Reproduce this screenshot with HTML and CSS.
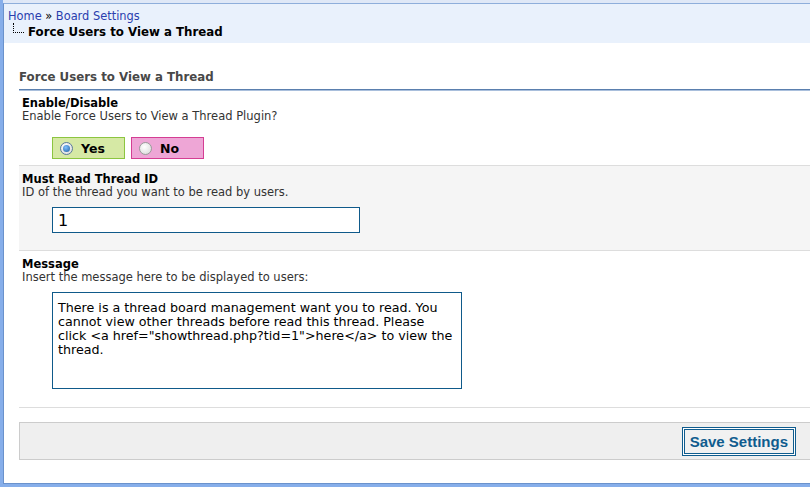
FILE: index.html
```html
<!DOCTYPE html>
<html lang="en">
<head>
    <meta charset="UTF-8">
    <title>Force Users to View a Thread</title>
    <link rel="stylesheet" href="styles.css">
</head>
<body>
    <div class="page">
        <div class="breadcrumb">
            <div><a href="#">Home</a> &raquo; <a href="#">Board Settings</a></div>
            <div class="current"><span class="tree"></span>Force Users to View a Thread</div>
        </div>

        <div class="content">
            <div class="form-container">
                <h2>Force Users to View a Thread</h2>

                <div class="row">
                    <label>Enable/Disable</label>
                    <div class="description">Enable Force Users to View a Thread Plugin?</div>
                    <div class="choices">
                        <div class="choice yes"><span class="radio checked"></span>Yes</div>
                        <div class="choice no"><span class="radio"></span>No</div>
                    </div>
                </div>

                <div class="row alt">
                    <label>Must Read Thread ID</label>
                    <div class="description">ID of the thread you want to be read by users.</div>
                    <input type="text" class="text-input" value="1">
                </div>

                <div class="row">
                    <label>Message</label>
                    <div class="description">Insert the message here to be displayed to users:</div>
                    <textarea class="text-area">There is a thread board management want you to read. You cannot view other threads before read this thread. Please click &lt;a href="showthread.php?tid=1"&gt;here&lt;/a&gt; to view the thread.</textarea>
                </div>

                <div class="buttons">
                    <button class="submit">Save Settings</button>
                </div>
            </div>
        </div>
    </div>
</body>
</html>
```

FILE: styles.css
```css
html {
    overflow: hidden;
}

body {
    margin: 0;
    padding: 3px 0 0 3px;
    width: 830px;
    height: 487px;
    box-sizing: border-box;
    background: #86aeea;
    font-family: Verdana, 'DejaVu Sans', sans-serif;
    font-size: 11.5px;
    color: #000;
}

.page {
    background: white;
    border-top: 1px solid #8eaedb;
    border-left: 1px solid #6a92cc;
    border-bottom: 1px solid #6a92cc;
    box-shadow: 0 -3px 0 #dfe8f7;
    height: 479px;
}

.breadcrumb {
    background: #e9f1fc;
    padding: 5px 4px 4px 4px;
    font-size: 11.4px;
    line-height: 14px;
}

.breadcrumb a {
    color: #2a3eae;
    text-decoration: none;
}

.breadcrumb .current {
    font-weight: bold;
    font-size: 11.8px;
    padding-left: 5px;
}

.tree {
    display: inline-block;
    width: 10px;
    height: 9px;
    margin-right: 4px;
    border-left: 1px dotted #000;
    border-bottom: 1px dotted #000;
    vertical-align: 3px;
}

.content {
    padding: 27px 0 0 15px;
}

h2 {
    margin: 0;
    font-size: 11.8px;
    line-height: 14px;
    color: #484848;
    padding-bottom: 5px;
    border-bottom: 1px solid #5a7fae;
    box-shadow: 0 1px 0 #a9bfdc;
}

.row {
    padding: 7px 3px 6px 3px;
    border-bottom: 1px solid #ddd;
}

.row.alt {
    background: #f5f5f5;
}

label {
    display: block;
    font-weight: bold;
    line-height: 13px;
}

.description {
    color: #333;
    line-height: 13px;
    margin-bottom: 8px;
}

.choices {
    display: flex;
    gap: 6px;
    padding-left: 30px;
    margin-top: 14px;
}

.choice {
    width: 71px;
    height: 20px;
    display: flex;
    align-items: center;
    font-weight: bold;
    font-size: 12.5px;
}

.choice.yes {
    background: #d6e9a5;
    border: 1px solid #8cc540;
}

.choice.no {
    background: #eea6d6;
    border: 1px solid #d43e93;
}

.radio {
    width: 11px;
    height: 11px;
    border-radius: 50%;
    border: 1px solid #9a9a9a;
    background: radial-gradient(circle at 40% 35%, #fff, #d6d6d6);
    margin: 0 8px 0 7px;
    position: relative;
}

.radio.checked {
    border-color: #5a7a9a;
}

.radio.checked::after {
    content: "";
    position: absolute;
    left: 2px;
    top: 2px;
    width: 7px;
    height: 7px;
    border-radius: 50%;
    background: radial-gradient(circle at 40% 35%, #7fc0ff, #1f5f9f);
}

.text-input {
    display: block;
    margin: 0 0 11px 30px;
    width: 308px;
    height: 26px;
    box-sizing: border-box;
    border: 1px solid #0f5a8a;
    padding: 1px 5px;
    font-family: Verdana, 'DejaVu Sans', sans-serif;
    font-size: 16px;
    background: white;
}

.text-area {
    display: block;
    margin: 3px 0 12px 30px;
    width: 410px;
    height: 97px;
    box-sizing: border-box;
    border: 1px solid #0f5a8a;
    padding: 8px 7px 6px 5px;
    font-family: Verdana, 'DejaVu Sans', sans-serif;
    font-size: 12.7px;
    line-height: 14px;
    resize: none;
}

.buttons {
    margin-top: 14px;
    background: #efefef;
    border: 1px solid #cccccc;
    height: 36px;
    padding: 0 15px 0 0;
    display: flex;
    align-items: center;
    justify-content: flex-end;
    width: 776px;
}

.submit {
    font-family: Arial, 'Liberation Sans', sans-serif;
    font-size: 15px;
    font-weight: bold;
    color: #0f5c8e;
    background: #f1f1f1;
    border: 1px solid #0f5c8e;
    box-shadow: inset 0 0 0 1px #fff, inset 0 0 0 2px #0f5c8e;
    padding: 2px 7px;
    height: 29px;
}
```
